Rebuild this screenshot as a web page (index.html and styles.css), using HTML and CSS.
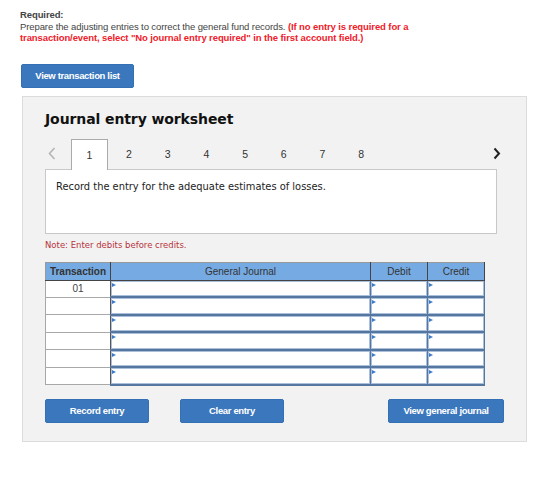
FILE: index.html
```html
<!DOCTYPE html>
<html lang="en">
<head>
  <meta charset="UTF-8">
  <meta name="viewport" content="width=device-width, initial-scale=1.0">
  <title>Journal Entry Worksheet</title>
  <link rel="stylesheet" href="styles.css">
</head>
<body>
  <div class="required">
    <strong>Required:</strong><br>
    Prepare the adjusting entries to correct the general fund records.
    <span class="warn">(If no entry is required for a</span><br>
    <span class="warn">transaction/event, select "No journal entry required" in the first account field.)</span>
  </div>

  <button class="btn btn-list">View transaction list</button>

  <div class="worksheet">
    <h2>Journal entry worksheet</h2>

    <div class="tabs">
      <span class="arrow prev">
        <svg width="8" height="13" viewBox="0 0 8 13"><path d="M6.5 1 L1.5 6.5 L6.5 12" fill="none" stroke="#b5b5b5" stroke-width="1.6"/></svg>
      </span>
      <span class="tab active">1</span>
      <span class="tab">2</span>
      <span class="tab">3</span>
      <span class="tab">4</span>
      <span class="tab">5</span>
      <span class="tab">6</span>
      <span class="tab">7</span>
      <span class="tab">8</span>
      <span class="arrow next">
        <svg width="8" height="13" viewBox="0 0 8 13"><path d="M1.5 1.5 L6 6.5 L1.5 11.5" fill="none" stroke="#222" stroke-width="2"/></svg>
      </span>
    </div>

    <div class="prompt">Record the entry for the adequate estimates of losses.</div>

    <p class="note">Note: Enter debits before credits.</p>

    <table class="journal">
      <colgroup>
        <col class="c-trans"><col class="c-acct"><col class="c-amt"><col class="c-amt">
      </colgroup>
      <thead>
        <tr>
          <th class="th-trans">Transaction</th>
          <th>General Journal</th>
          <th>Debit</th>
          <th>Credit</th>
        </tr>
      </thead>
      <tbody>
        <tr><td class="trans">01</td><td class="cell"></td><td class="cell"></td><td class="cell"></td></tr>
        <tr><td class="trans"></td><td class="cell"></td><td class="cell"></td><td class="cell"></td></tr>
        <tr><td class="trans"></td><td class="cell"></td><td class="cell"></td><td class="cell"></td></tr>
        <tr><td class="trans"></td><td class="cell"></td><td class="cell"></td><td class="cell"></td></tr>
        <tr><td class="trans"></td><td class="cell"></td><td class="cell"></td><td class="cell"></td></tr>
        <tr><td class="trans"></td><td class="cell"></td><td class="cell"></td><td class="cell"></td></tr>
      </tbody>
    </table>

    <div class="actions">
      <button class="btn btn-record">Record entry</button>
      <button class="btn btn-clear">Clear entry</button>
      <button class="btn btn-view">View general journal</button>
    </div>
  </div>
</body>
</html>
```

FILE: styles.css
```css
body {
  margin: 0;
  padding: 9px 20px;
  font-family: "Liberation Sans", Arial, sans-serif;
  background: #fff;
}
.required {
  font-size: 9.5px;
  line-height: 11.5px;
  letter-spacing: -0.1px;
  color: #444;
}
.required strong {
  color: #444;
}
.warn {
  color: #f0202a;
  font-weight: bold;
}
.btn {
  background-color: #3b77bc;
  color: #fff;
  font-family: "Liberation Sans", Arial, sans-serif;
  font-weight: bold;
  font-size: 9.5px;
  letter-spacing: -0.35px;
  border: 1px solid #3470b4;
  border-radius: 2px;
  height: 24px;
  padding: 0;
  cursor: pointer;
}
.btn-list {
  display: block;
  margin: 20px 0 0 1px;
  width: 113px;
}
.worksheet {
  margin-top: 8px;
  margin-left: 2px;
  width: 505px;
  box-sizing: border-box;
  background: #f2f2f2;
  border: 1px solid #dcdcdc;
  padding: 12px 29px 18px 22px;
}
.worksheet h2 {
  font-family: "DejaVu Sans", Verdana, sans-serif;
  font-size: 14px;
  letter-spacing: -0.1px;
  font-weight: bold;
  color: #111;
  margin: 0 0 10px;
  line-height: 20px;
}
.tabs {
  display: flex;
  align-items: stretch;
  height: 30px;
  font-size: 10.5px;
  color: #333;
}
.arrow {
  display: flex;
  align-items: center;
}
.arrow.prev {
  width: 26px;
  padding-left: 3px;
  box-sizing: border-box;
}
.arrow.next {
  margin-left: auto;
  margin-right: -4px;
}
.tab {
  width: 38.7px;
  display: flex;
  align-items: center;
  justify-content: center;
  box-sizing: border-box;
}
.tab.active {
  background: #fff;
  border: 1px solid #aaa;
  border-bottom: none;
  margin-bottom: -1px;
  position: relative;
  z-index: 1;
  width: 37px;
  margin-right: 1.7px;
}
.prompt {
  background: #fff;
  border: 1px solid #c8c8c8;
  height: 65px;
  box-sizing: border-box;
  padding: 11px 10px;
  font-family: "DejaVu Sans", Verdana, sans-serif;
  font-size: 9.9px;
  color: #222;
}
.note {
  font-family: "DejaVu Sans", Verdana, sans-serif;
  font-size: 8.5px;
  color: #b8323b;
  margin: 6px 0 12px;
}
.journal {
  width: 439px;
  border-collapse: collapse;
  table-layout: fixed;
  font-size: 10px;
}
.c-trans { width: 65px; }
.c-acct { width: 260px; }
.c-amt { width: 57px; }
.journal th {
  background: #76aae2;
  border: 1px solid #444;
  border-top-color: #999;
  height: 17px;
  padding: 0;
  font-weight: normal;
  color: #333;
}
.journal th.th-trans {
  font-weight: bold;
  border-left-color: #999;
}
.journal td {
  height: 15.5px;
  padding: 0;
  background: #fff;
}
.journal td.trans {
  border: 1px solid #a8a8a8;
  border-right: 1px solid #555;
  text-align: center;
  color: #444;
}
.journal td.cell {
  border: 1px solid #55779f;
  border-bottom-width: 2px;
  position: relative;
  box-shadow: inset 0 0 0 1px #a9bfdc;
}
.journal td.cell::before {
  content: "";
  position: absolute;
  top: 2px;
  left: 1px;
  border-left: 4px solid #3c7bc8;
  border-top: 2px solid transparent;
  border-bottom: 2px solid transparent;
}
.actions {
  display: flex;
  margin-top: 13px;
}
.btn-record,
.btn-clear {
  width: 104px;
}
.btn-clear {
  margin-left: 31px;
}
.btn-view {
  width: 116px;
  margin-left: auto;
  margin-right: -7px;
}
```
